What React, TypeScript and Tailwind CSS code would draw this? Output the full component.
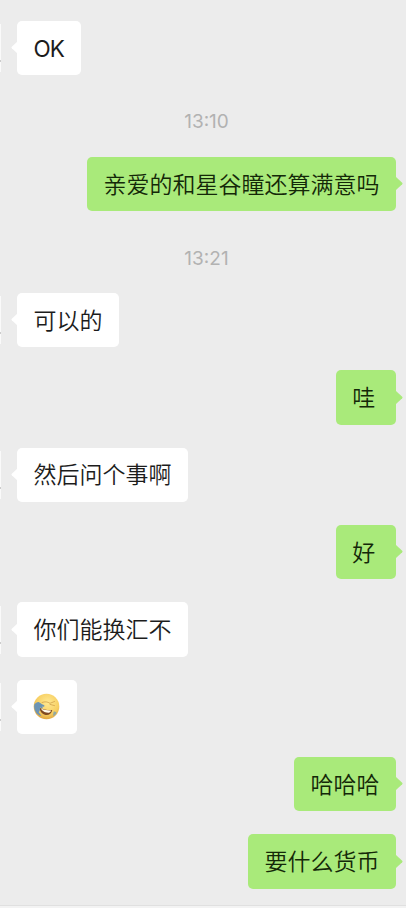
import React from 'react'

type Item =
  | { kind: 'time'; text: string }
  | { kind: 'in' | 'out'; text: string; emoji?: boolean }

const items: Item[] = [
  { kind: 'in', text: 'OK' },
  { kind: 'time', text: '13:10' },
  { kind: 'out', text: '亲爱的和星谷瞳还算满意吗' },
  { kind: 'time', text: '13:21' },
  { kind: 'in', text: '可以的' },
  { kind: 'out', text: '哇' },
  { kind: 'in', text: '然后问个事啊' },
  { kind: 'out', text: '好' },
  { kind: 'in', text: '你们能换汇不' },
  { kind: 'in', text: '', emoji: true },
  { kind: 'out', text: '哈哈哈' },
  { kind: 'out', text: '要什么货币' },
]

// laughing face with a hand over one eye
function FacepalmEmoji() {
  return (
    <svg className="block h-[27px] w-[27px]" viewBox="0 0 27 27" fill="none">
      <defs>
        <radialGradient id="face" cx="0.55" cy="0.35" r="0.68">
          <stop offset="0" stopColor="#ffe993" />
          <stop offset="0.65" stopColor="#f7cf62" />
          <stop offset="1" stopColor="#dda03b" />
        </radialGradient>
      </defs>
      <circle cx="13.5" cy="13.5" r="12.8" fill="url(#face)" />
      <path d="M9 9.5c3-1.2 5.500-.8 8 .8l4.500-1.800M17 11.400l4.500 1.200" stroke="#d0a14a" strokeWidth="0.8" strokeLinecap="round" />
      <path d="M6.500 14.800c4 1.900 8.500 2.600 12.800 2.200-.9 4-3.700 5.600-6.900 4.900-3.200-.7-5.500-3.500-5.900-7.100z" fill="#804a22" />
      <path d="M8 15.500c3.200 1.500 6.700 2 10.200 1.900-.7 2-2.500 2.600-4.900 2.100-2.500-.5-4.400-1.900-5.300-4z" fill="#fff9ea" />
      <path d="M1.300 11.500c1.500-1.600 3-2.700 4.700-2.300 1.400.4 2 1.600 3.600 2.400 1 .5 2.100.8 1.900 1.500-.2.800-1.700.5-2.800.3l1 1.200c.5.700-.2 1.100-.9.700L7.100 14.600c.3 2-.5 3.500-1.300 4.600l2.700 3.800c-2.800-.5-4.500-1.900-5.700-4-1.400-2.200-2-4.900-1.500-7.500z" fill="#6c94b4" />
      <path d="M20.800 18.500c1.300-.1 2.300.5 2.800 1.300-.7 1.400-1.700 2.600-3 3.400-.8-1.400-.4-3.200.2-4.700z" fill="#8fa8a4" />
    </svg>
  )
}

function Time({ text }: { text: string }) {
  return (
    <div className="flex h-[81.6px] items-center justify-center pt-[12px] pl-[7px] font-[Inter,'Liberation_Sans',sans-serif] text-[19px] leading-none font-normal text-[#b2b2b2]">
      {text}
    </div>
  )
}

function Bubble({ item }: { item: Exclude<Item, { kind: 'time' }> }) {
  const out = item.kind === 'out'
  const latin = item.text === 'OK'
  return (
    <div className={out ? 'flex items-center justify-end pr-[10px]' : 'flex items-center'}>
      {!out && (
        <div className="mr-[16.3px] flex h-[48px] w-px flex-col justify-end bg-[#fafafa] pb-[10px]">
          <span className="h-[2px] w-px bg-[#cccccc]" />
        </div>
      )}
      <div
        className={`relative flex h-[54.5px] min-w-[60px] items-center rounded-[5px] text-[23px] leading-none whitespace-nowrap ${
          out ? 'bg-[#a9ea7a] pr-[16.5px] pl-[16.2px] text-[#142808]' : 'bg-white px-[16.2px] text-[#1c1c1c]'
        }`}
      >
        {item.emoji ? (
          <FacepalmEmoji />
        ) : (
          <span className={latin ? 'pt-[2px] pr-[1.2px] text-[22.5px] font-normal tracking-[-0.9px]' : 'pt-[2px]'}>{item.text}</span>
        )}
        <svg
          className={`absolute top-[20.5px] h-[13px] w-[7px] ${out ? '-right-[6.5px] rotate-180' : '-left-[6.5px]'}`}
          viewBox="0 0 7 13"
        >
          <path d="M7 0 .8 5.7Q0 6.5.8 7.3L7 13z" fill={out ? '#a9ea7a' : '#ffffff'} />
        </svg>
      </div>
    </div>
  )
}

export default function App() {
  return (
    <main className="flex h-[908px] w-[406px] flex-col justify-between overflow-hidden bg-[#ececec] font-[Inter,'Noto_Sans_CJK_SC',sans-serif] font-[350]">
      <div className="pt-[20.7px]">
        {items.map((item, i) => {
          if (item.kind === 'time') return <Time key={i} text={item.text} />
          const prev = items[i - 1]
          return (
            <div key={i} className={prev && prev.kind !== 'time' ? 'mt-[22.85px]' : ''}>
              <Bubble item={item} />
            </div>
          )
        })}
      </div>
      <div className="h-[3px] border-t border-[#e0e0e0] bg-[#f3f3f3]" />
    </main>
  )
}
